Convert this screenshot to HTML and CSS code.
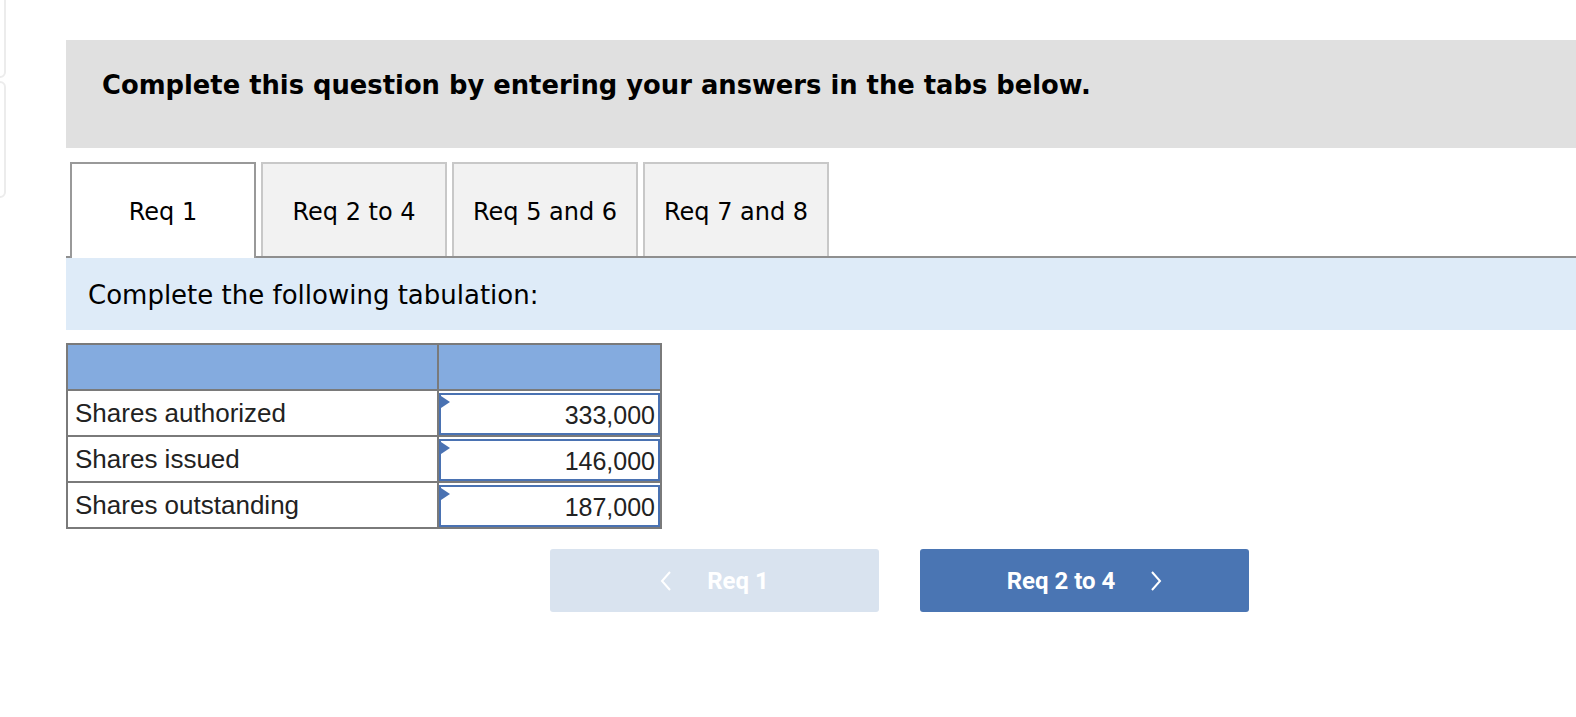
FILE: index.html
```html
<!DOCTYPE html>
<html lang="en">
<head>
  <meta charset="UTF-8" />
  <meta name="viewport" content="width=device-width, initial-scale=1" />
  <title>Req 1</title>
  <link rel="stylesheet" href="styles.css">
</head>
<body>

  <div class="edge edge-top"></div>
  <div class="edge edge-bottom"></div>

  <main class="question">
    <div class="banner">
      <h2>Complete this question by entering your answers in the tabs below.</h2>
    </div>

    <nav class="tabs">
      <a href="#" class="tab active">Req 1</a>
      <a href="#" class="tab">Req 2 to 4</a>
      <a href="#" class="tab">Req 5 and 6</a>
      <a href="#" class="tab">Req 7 and 8</a>
    </nav>

    <div class="instructions">Complete the following tabulation:</div>

    <table class="tabulation">
      <thead>
        <tr>
          <th class="label-col"></th>
          <th class="value-col"></th>
        </tr>
      </thead>
      <tbody>
        <tr>
          <td class="label">Shares authorized</td>
          <td class="value"><div class="field">333,000</div></td>
        </tr>
        <tr>
          <td class="label">Shares issued</td>
          <td class="value"><div class="field">146,000</div></td>
        </tr>
        <tr>
          <td class="label">Shares outstanding</td>
          <td class="value"><div class="field">187,000</div></td>
        </tr>
      </tbody>
    </table>

    <div class="pager">
      <button class="btn btn-prev" disabled>
        <svg width="12" height="20" viewBox="0 0 12 20"><polyline points="10,1 2,10 10,19" fill="none" stroke="#fff" stroke-width="2"/></svg>
        <span>Req 1</span>
      </button>
      <button class="btn btn-next">
        <span>Req 2 to 4</span>
        <svg width="12" height="20" viewBox="0 0 12 20"><polyline points="2,1 10,10 2,19" fill="none" stroke="#fff" stroke-width="2"/></svg>
      </button>
    </div>
  </main>

</body>
</html>
```

FILE: styles.css
```css
body {
  margin: 0;
  background: #fff;
  color: #000;
  font-family: "DejaVu Sans", Verdana, sans-serif;
}
.edge {
  position: absolute;
  left: -200px;
  width: 202px;
  border: 2px solid #ececec;
  border-radius: 6px;
}
.edge-top {
  top: -20px;
  height: 94px;
}
.edge-bottom {
  top: 81px;
  height: 113px;
}
.question {
  padding: 40px 0 0 66px;
}
.banner {
  background: #e0e0e0;
  height: 108px;
  box-sizing: border-box;
  padding: 30px 36px 0;
}
.banner h2 {
  margin: 0;
  font-size: 25.8px;
  font-weight: bold;
  line-height: 30px;
}
.tabs {
  display: flex;
  align-items: flex-start;
  gap: 5px;
  height: 94px;
  margin-top: 14px;
  padding-left: 4px;
  border-bottom: 2px solid #8f8f8f;
}
.tab {
  box-sizing: border-box;
  width: 186px;
  height: 94px;
  display: flex;
  align-items: center;
  justify-content: center;
  padding-top: 3px;
  background: #f2f2f2;
  border: 2px solid #c8c8c8;
  border-bottom: none;
  color: #000;
  font-size: 24px;
  text-decoration: none;
}
.tab.active {
  background: #fff;
  border-color: #999;
  height: 96px;
  margin-bottom: -2px;
  padding-bottom: 2px;
}
.instructions {
  background: #deebf8;
  height: 72px;
  display: flex;
  align-items: center;
  padding: 2px 0 0 22px;
  box-sizing: border-box;
  font-size: 26px;
}
.tabulation {
  margin-top: 13px;
  border-collapse: collapse;
  font-family: "Liberation Sans", Arial, sans-serif;
  font-size: 25px;
  color: #222;
}
.tabulation th {
  background: #84abdf;
  height: 44px;
  border: 2px solid #7a7a7a;
  padding: 0;
}
.label-col {
  width: 369px;
}
.value-col {
  width: 221px;
}
.tabulation td {
  border: 2px solid #7a7a7a;
  height: 43px;
  padding: 0;
}
.label {
  padding-left: 7px !important;
  font-size: 26px;
}
.value {
  padding: 1px 0 0 0 !important;
}
.field {
  position: relative;
  box-sizing: border-box;
  height: 42px;
  border: 2px solid #4a72b2;
  text-align: right;
  padding: 0 3px 0 0;
  line-height: 40px;
}
.field::before {
  content: "";
  position: absolute;
  left: 0;
  top: 1px;
  border-left: 9px solid #4a72b2;
  border-top: 6px solid transparent;
  border-bottom: 6px solid transparent;
}
.pager {
  display: flex;
  gap: 41px;
  margin-top: 20px;
  padding-left: 484px;
}
.btn {
  width: 329px;
  height: 63px;
  border: none;
  border-radius: 3px;
  display: flex;
  align-items: center;
  justify-content: center;
  gap: 35px;
  color: #fff;
  font-family: Roboto, "Liberation Sans", sans-serif;
  font-weight: bold;
  font-size: 24px;
  cursor: pointer;
}
.btn-prev {
  background: #d9e3ef;
  cursor: default;
}
.btn-next {
  background: #4a75b3;
}
```
